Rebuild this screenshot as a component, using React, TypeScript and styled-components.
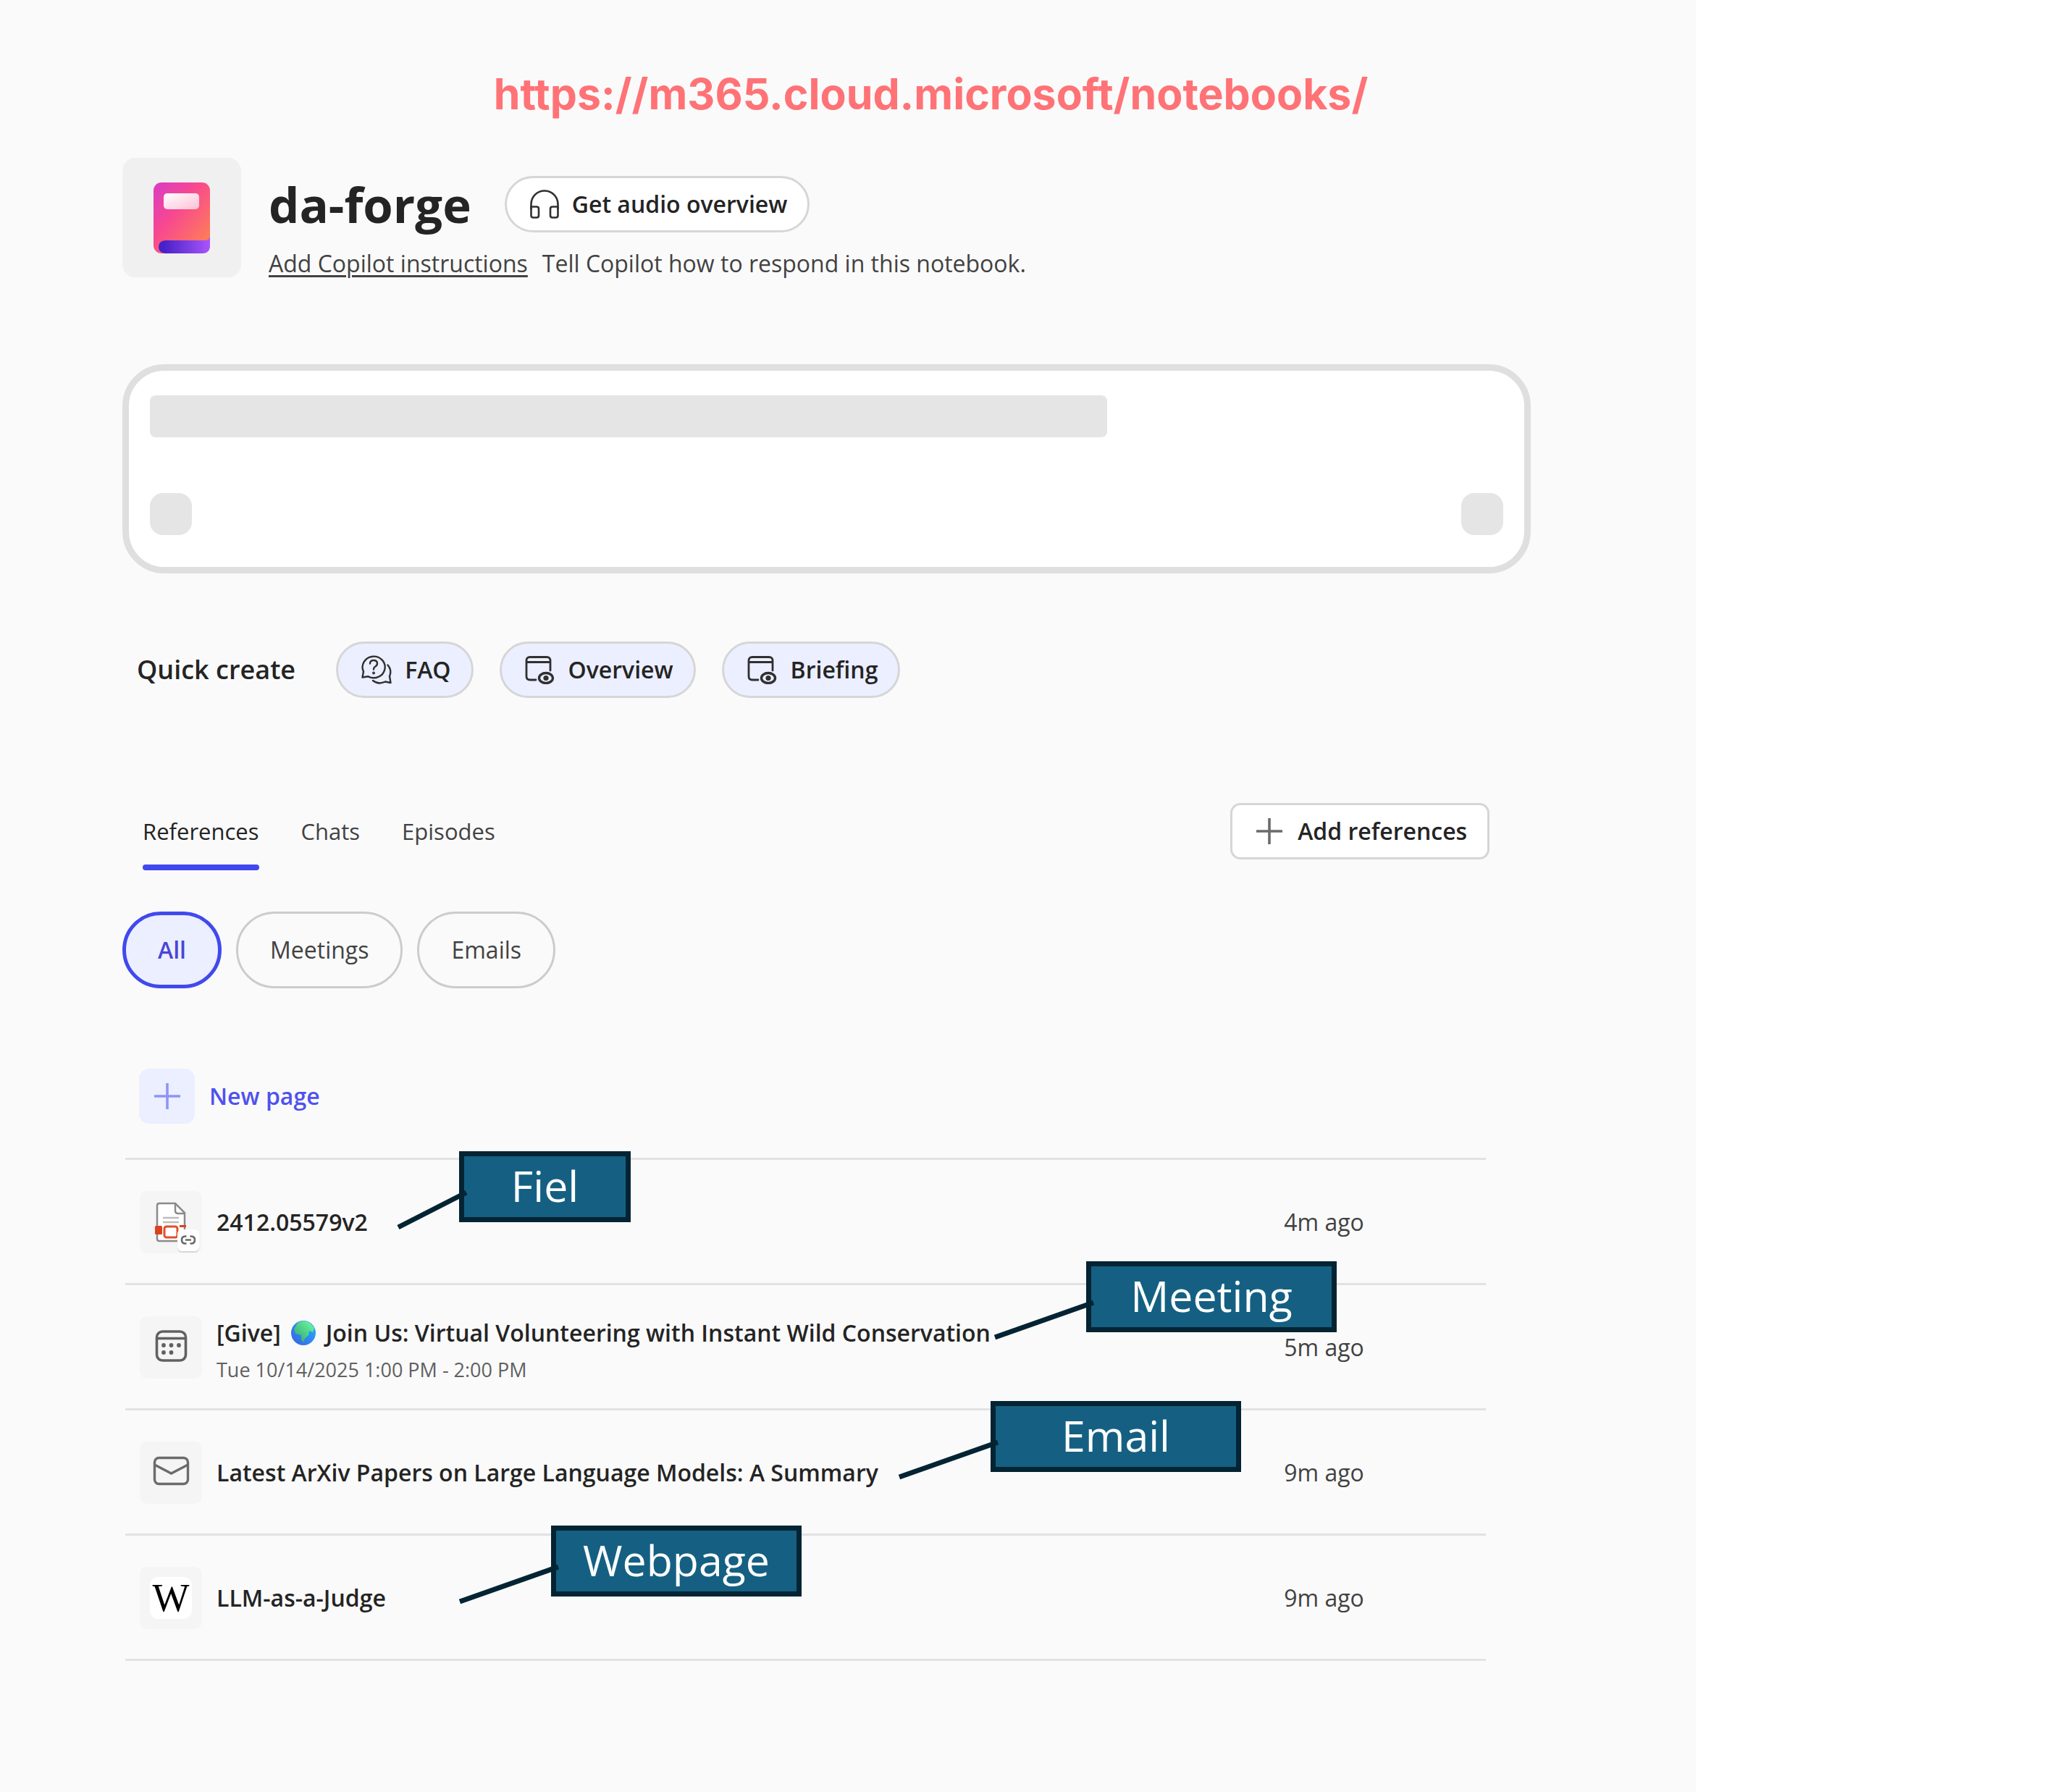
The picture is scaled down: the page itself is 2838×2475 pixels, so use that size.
import React from "react";
import styled, { createGlobalStyle } from "styled-components";

const GlobalStyle = createGlobalStyle`
  * { box-sizing: border-box; }
  body {
    margin: 0;
    background: #ffffff;
    color: #242424;
    font-family: "Open Sans", "Noto Sans", sans-serif;
    font-size: 32px;
    line-height: 44px;
  }
  button, a { font: inherit; color: inherit; }
  button { margin: 0; cursor: pointer; }
  svg { display: block; flex: none; }
`;

const Page = styled.div`
  display: grid;
  grid-template-columns: minmax(0, 4.724fr) minmax(0, 1fr);
  min-height: 100vh;
`;

const Panel = styled.main`
  padding: 90px 228px 90px 169px;
  background: #fafafa;
`;

const SiteLink = styled.a`
  display: block;
  padding-left: 288px;
  color: #ff7276;
  font-family: Inter, "Open Sans", sans-serif;
  font-size: 59px;
  line-height: 80px;
  font-weight: 700;
  text-align: center;
  text-decoration: none;
`;

const Header = styled.header`
  display: flex;
  align-items: flex-start;
  gap: 38px;
  margin-top: 48px;
`;

const NotebookTile = styled.div`
  display: grid;
  place-items: center;
  width: 164px;
  height: 165px;
  border-radius: 18px;
  background: #f0f0f0;
`;

const HeaderText = styled.div`
  padding-top: 25px;
`;

const TitleRow = styled.div`
  display: flex;
  align-items: center;
  gap: 46px;
`;

const Title = styled.h1`
  margin: 0;
  font-size: 67px;
  line-height: 76px;
  font-weight: 700;
`;

const PillButton = styled.button<{ $tinted?: boolean }>`
  display: flex;
  align-items: center;
  gap: 18px;
  height: 78px;
  padding: 0 28px 0 32px;
  border: 3px solid #d6d6d6;
  border-radius: 39px;
  background: ${(p) => (p.$tinted ? "#ebefff" : "#ffffff")};
  font-weight: 600;
`;

const Instructions = styled.p`
  display: flex;
  gap: 20px;
  margin: 21px 0 0;
  color: #424242;
`;

const InstructionsLink = styled.a`
  text-decoration: underline;
  text-decoration-thickness: 3px;
  text-underline-offset: 4px;
`;

const Composer = styled.section`
  display: flex;
  flex-direction: column;
  gap: 77px;
  margin-top: 117px;
  padding: 34px 29px 44px;
  border: 9px solid #dfdfdf;
  border-radius: 58px;
  background: #ffffff;
`;

const SkeletonLine = styled.div`
  width: 70.7%;
  height: 58px;
  border-radius: 8px;
  background: #e5e5e5;
`;

const SkeletonActions = styled.div`
  display: flex;
  justify-content: space-between;
`;

const SkeletonChip = styled.div`
  width: 58px;
  height: 58px;
  border-radius: 18px;
  background: #e5e5e5;
`;

const QuickCreate = styled.section`
  display: flex;
  align-items: center;
  gap: 36px;
  margin-top: 94px;
  padding-left: 20px;
`;

const QuickLabel = styled.h2`
  margin: 0 20px 0 0;
  font-size: 36px;
  line-height: 44px;
  font-weight: 600;
`;

const TabsBar = styled.div`
  display: flex;
  justify-content: space-between;
  align-items: flex-start;
  margin-top: 145px;
  padding: 0 57px 0 28px;
`;

const Tabs = styled.div`
  display: flex;
  gap: 58px;
`;

const Tab = styled.button`
  padding: 17px 0 0;
  border: 0;
  background: none;
  color: #424242;
  font-size: 31px;
  &::after {
    content: "";
    display: block;
    height: 8px;
    margin-top: 24px;
    border-radius: 4px;
  }
  &[aria-selected="true"] { color: #242424; }
  &[aria-selected="true"]::after { background: #4149ed; }
`;

const AddButton = styled(PillButton)`
  gap: 20px;
  border-radius: 14px;
`;

const Filters = styled.div`
  display: flex;
  gap: 20px;
  margin-top: 57px;
`;

const Filter = styled.button`
  height: 106px;
  padding: 0 44px;
  border: 3px solid #cccccc;
  border-radius: 53px;
  background: none;
  color: #424242;
  &[aria-pressed="true"] {
    border: 5px solid #4149ed;
    background: #ebefff;
    color: #4a45d6;
    font-weight: 600;
  }
`;

const NewPage = styled.button`
  display: flex;
  align-items: center;
  gap: 20px;
  margin: 111px 0 0 23px;
  padding: 0;
  border: 0;
  background: none;
  color: #4f52ee;
  font-weight: 600;
`;

const NewPageTile = styled.span`
  display: grid;
  place-items: center;
  width: 77px;
  height: 76px;
  border-radius: 14px;
  background: #ebefff;
`;

const List = styled.ul`
  margin: 47px 62px 0 4px;
  padding: 0;
  border-top: 3px solid #e2e2e2;
  list-style: none;
`;

const Row = styled.li`
  position: relative;
  display: grid;
  grid-template-columns: 86px minmax(0, 1fr) 279px;
  align-items: center;
  column-gap: 20px;
  height: 173px;
  padding: 2px 0 0 20px;
  border-bottom: 3px solid #e2e2e2;
`;

const Tile = styled.span`
  display: grid;
  place-items: center;
  width: 86px;
  height: 86px;
  border-radius: 10px;
  background: #f5f5f5;
`;

const Favicon = styled.span`
  display: grid;
  place-items: center;
  width: 58px;
  height: 58px;
  border-radius: 12px;
  background: #ffffff;
  color: #000000;
  font-family: "Liberation Serif", serif;
  font-size: 54px;
`;

const RowText = styled.div`
  display: grid;
  row-gap: 11px;
`;

const RowTitle = styled.a`
  display: flex;
  align-items: center;
  gap: 14px;
  font-weight: 600;
  line-height: 50px;
  text-decoration: none;
  white-space: nowrap;
`;

const RowMeta = styled.span`
  color: #616161;
  font-size: 27px;
  line-height: 30px;
`;

const RowTime = styled.time`
  color: #424242;
`;

const Callout = styled.div<{ $left: number; $top: number; $width: number }>`
  position: absolute;
  z-index: 1;
  left: ${(p) => p.$left}px;
  top: ${(p) => p.$top}px;
  width: ${(p) => p.$width}px;
`;

const CalloutLabel = styled.div`
  padding-bottom: 4px;
  border: 7px solid #042433;
  background: #156082;
  color: #ffffff;
  font-size: 59px;
  line-height: 80px;
  text-align: center;
`;

const Connector = styled.svg`
  position: absolute;
  left: -130px;
  top: 0;
`;

const ink = "#303030";

function BookIcon() {
  return (
    <svg width="78" height="98" viewBox="0 0 78 98">
      <defs>
        <linearGradient id="cover" x1="0" y1="0" x2="1" y2="1">
          <stop offset="0" stopColor="#d93cc6" />
          <stop offset="0.4" stopColor="#f8488f" />
          <stop offset="1" stopColor="#ff8a4c" />
        </linearGradient>
        <linearGradient id="pages" x1="0" y1="0" x2="1" y2="0">
          <stop offset="0.1" stopColor="#4722c8" />
          <stop offset="1" stopColor="#a955fb" />
        </linearGradient>
        <linearGradient id="plate" x1="0" y1="0" x2="1" y2="1">
          <stop offset="0" stopColor="#ffffff" />
          <stop offset="1" stopColor="#ffbfd5" />
        </linearGradient>
      </defs>
      <rect width="78" height="98" rx="11" fill="url(#cover)" />
      <path d="M16 80H72Q78 79 78 73V87Q78 98 67 98H16Q7 97 7 89Q7 81 16 80Z" fill="url(#pages)" />
      <rect x="14" y="15" width="49" height="22" rx="5" fill="url(#plate)" />
    </svg>
  );
}

function HeadphonesIcon() {
  return (
    <svg width="40" height="40" viewBox="0 0 40 40" fill="none" stroke={ink} strokeWidth="2.6">
      <path d="M1.5 27V20a18.5 18.5 0 0 1 37 0v7" />
      <path d="M1.5 23.5h7.500q3 0 3 3v9q0 3-3 3h-4.500q-3 0-3-3zM38.500 23.500h-7.500q-3 0-3 3v9q0 3 3 3h4.500q3 0 3-3z" />
    </svg>
  );
}

function FaqIcon() {
  return (
    <svg width="42" height="40" viewBox="0 0 42 40" fill="none" stroke={ink} strokeWidth="2.4" strokeLinecap="round" strokeLinejoin="round">
      <path d="M1.500 30.500L3 22.500A15.500 14.800 0 1 1 9.500 29.300z" />
      <path d="M12 11.500q0-4.500 5-4.500t5 4.300q0 2.800-3 4.500-2 1.200-2 3.700" />
      <circle cx="17" cy="24.500" r="0.800" />
      <path d="M36.500 13.500q6 7 2.500 15.500l1.500 9-7.500-1.500q-9.500 4.500-17-1.500" />
    </svg>
  );
}

function PagePreviewIcon() {
  return (
    <svg width="42" height="40" viewBox="0 0 42 40" fill="none" stroke={ink} strokeWidth="2.800" strokeLinecap="round">
      <path d="M35 21V7.500q0-5-5-5H7q-5 0-5 5V29q0 5 5 5h8M2 9.500h33" />
      <ellipse cx="29" cy="31.500" rx="9.500" ry="7" strokeWidth="3.400" />
      <circle cx="29" cy="31.500" r="3.600" fill={ink} stroke="none" />
    </svg>
  );
}

function PlusIcon({ color }: { color: string }) {
  return (
    <svg width="38" height="38" viewBox="0 0 38 38" stroke={color} strokeWidth="3.600">
      <path d="M19 1v36M1 19h36" />
    </svg>
  );
}

function PdfIcon() {
  return (
    <svg width="86" height="86" viewBox="0 0 86 86" fill="none">
      <path d="M24 20q0-3 3-3H49L62 30V69H27q-3 0-3-3z" fill="#ffffff" stroke="#8a8a8a" strokeWidth="2.500" />
      <path d="M49 17v10q0 4 4 4h9" stroke="#8a8a8a" strokeWidth="2.500" />
      <path d="M32 37H54M32 43H54" stroke="#bdbdbd" strokeWidth="2.500" />
      <rect x="21" y="48" width="10" height="12" rx="1.500" fill="#d9441f" />
      <rect x="34" y="49" width="18" height="15" rx="3" fill="#ffffff" stroke="#e04f2b" strokeWidth="3" />
      <path d="M55 48.500h9" stroke="#d9441f" strokeWidth="3" />
      <rect x="52" y="55" width="30" height="30" rx="6" fill="#d8d8d8" />
      <rect x="52" y="53" width="30" height="30" rx="6" fill="#ffffff" />
      <path d="M64.500 62.500h-1.500q-5 0-5 5t5 5h1.500M69.500 62.500h1.500q5 0 5 5t-5 5h-1.500M63 67.500h8" stroke="#6a6a6a" strokeWidth="2.600" />
    </svg>
  );
}

function CalendarIcon() {
  return (
    <svg width="86" height="86" viewBox="0 0 86 86" fill="none" stroke="#616161" strokeWidth="3.600">
      <rect x="23.500" y="21" width="40" height="40" rx="8" />
      <path d="M23.500 30.500h40" />
      <g fill="#616161" stroke="none">
        <circle cx="33" cy="40" r="2.900" />
        <circle cx="43.500" cy="40" r="2.900" />
        <circle cx="54" cy="40" r="2.900" />
        <circle cx="33" cy="50" r="2.900" />
        <circle cx="43.500" cy="50" r="2.900" />
      </g>
    </svg>
  );
}

function MailIcon() {
  return (
    <svg width="86" height="86" viewBox="0 0 86 86" fill="none" stroke="#6b6b6b" strokeWidth="3.400">
      <rect x="20.500" y="22.500" width="46" height="36" rx="6" />
      <path d="M20.500 32L43.500 44L66.500 32" />
    </svg>
  );
}

function GlobeIcon() {
  return (
    <svg width="34" height="34" viewBox="0 0 34 34">
      <defs>
        <linearGradient id="sea" x1="0" y1="1" x2="1" y2="0">
          <stop offset="0" stopColor="#3a5fe0" />
          <stop offset="1" stopColor="#22b4ff" />
        </linearGradient>
        <linearGradient id="land" x1="0" y1="1" x2="1" y2="0">
          <stop offset="0" stopColor="#2f9e72" />
          <stop offset="1" stopColor="#6fffa0" />
        </linearGradient>
      </defs>
      <circle cx="17" cy="17" r="17" fill="url(#sea)" />
      <path d="M9 3Q17-2 26 3L32 10L30 16L25 14L24 20L19 25L17 30L14 26L14 20L6 18L4 12Z" fill="url(#land)" />
    </svg>
  );
}

type Reference = {
  title: React.ReactNode;
  meta?: string;
  age: string;
  icon: React.ReactNode;
  callout: { text: string; left: number; top: number; width: number; reach: number };
};

const references: Reference[] = [
  {
    title: "2412.05579v2",
    age: "4m ago",
    icon: <PdfIcon />,
    callout: { text: "Fiel", left: 461, top: -12, width: 237, reach: 84 },
  },
  {
    title: (
      <>
        <span>[Give]</span>
        <GlobeIcon />
        <span>Join Us: Virtual Volunteering with Instant Wild Conservation</span>
      </>
    ),
    meta: "Tue 10/14/2025 1:00 PM - 2:00 PM",
    age: "5m ago",
    icon: <CalendarIcon />,
    callout: { text: "Meeting", left: 1327, top: -33, width: 346, reach: 126 },
  },
  {
    title: "Latest ArXiv Papers on Large Language Models: A Summary",
    age: "9m ago",
    icon: <MailIcon />,
    callout: { text: "Email", left: 1195, top: -13, width: 346, reach: 126 },
  },
  {
    title: "LLM-as-a-Judge",
    age: "9m ago",
    icon: <Favicon>W</Favicon>,
    callout: { text: "Webpage", left: 588, top: -14, width: 346, reach: 126 },
  },
];

export default function App() {
  return (
    <Page>
      <GlobalStyle />
      <Panel>
        <SiteLink href="#notebooks">https://m365.cloud.microsoft/notebooks/</SiteLink>

        <Header>
          <NotebookTile>
            <BookIcon />
          </NotebookTile>
          <HeaderText>
            <TitleRow>
              <Title>da-forge</Title>
              <PillButton type="button">
                <HeadphonesIcon />
                Get audio overview
              </PillButton>
            </TitleRow>
            <Instructions>
              <InstructionsLink href="#instructions">Add Copilot instructions</InstructionsLink>
              <span>Tell Copilot how to respond in this notebook.</span>
            </Instructions>
          </HeaderText>
        </Header>

        <Composer aria-busy="true">
          <SkeletonLine />
          <SkeletonActions>
            <SkeletonChip />
            <SkeletonChip />
          </SkeletonActions>
        </Composer>

        <QuickCreate>
          <QuickLabel>Quick create</QuickLabel>
          <PillButton type="button" $tinted>
            <FaqIcon />
            FAQ
          </PillButton>
          <PillButton type="button" $tinted>
            <PagePreviewIcon />
            Overview
          </PillButton>
          <PillButton type="button" $tinted>
            <PagePreviewIcon />
            Briefing
          </PillButton>
        </QuickCreate>

        <TabsBar>
          <Tabs role="tablist">
            <Tab type="button" role="tab" aria-selected="true">References</Tab>
            <Tab type="button" role="tab" aria-selected="false">Chats</Tab>
            <Tab type="button" role="tab" aria-selected="false">Episodes</Tab>
          </Tabs>
          <AddButton type="button">
            <PlusIcon color="#6b6b6b" />
            Add references
          </AddButton>
        </TabsBar>

        <Filters>
          <Filter type="button" aria-pressed="true">All</Filter>
          <Filter type="button" aria-pressed="false">Meetings</Filter>
          <Filter type="button" aria-pressed="false">Emails</Filter>
        </Filters>

        <NewPage type="button">
          <NewPageTile>
            <PlusIcon color="#8f95f5" />
          </NewPageTile>
          New page
        </NewPage>

        <List>
          {references.map((item, index) => (
            <Row key={index}>
              <Tile>{item.icon}</Tile>
              <RowText>
                <RowTitle href="#reference">{item.title}</RowTitle>
                {item.meta && <RowMeta>{item.meta}</RowMeta>}
              </RowText>
              <RowTime>{item.age}</RowTime>
              <Callout $left={item.callout.left} $top={item.callout.top} $width={item.callout.width}>
                <CalloutLabel>{item.callout.text}</CalloutLabel>
                <Connector width="145" height="112" viewBox="0 0 145 112">
                  <line x1={130 - item.callout.reach} y1="105" x2="140" y2="57" stroke="#042433" strokeWidth="7" />
                </Connector>
              </Callout>
            </Row>
          ))}
        </List>
      </Panel>
    </Page>
  );
}
